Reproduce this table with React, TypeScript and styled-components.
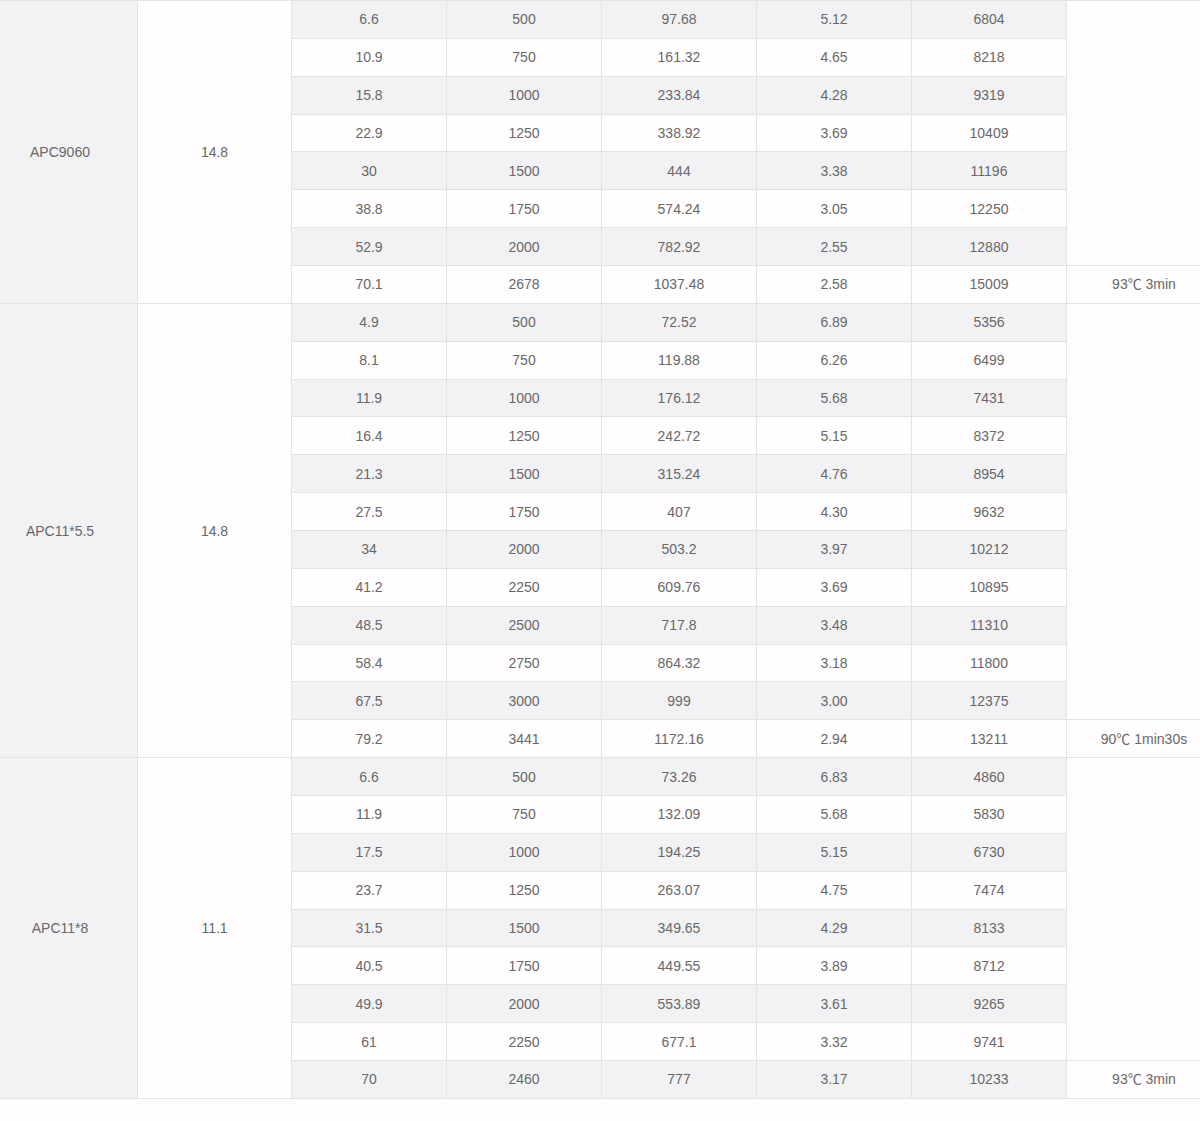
import styled, { createGlobalStyle } from "styled-components";

type Block = {
  model: string;
  voltage: string;
  rows: string[][];
  note: string;
};

const blocks: Block[] = [
  {
    model: "APC9060",
    voltage: "14.8",
    note: "93℃ 3min",
    rows: [
      ["6.6", "500", "97.68", "5.12", "6804"],
      ["10.9", "750", "161.32", "4.65", "8218"],
      ["15.8", "1000", "233.84", "4.28", "9319"],
      ["22.9", "1250", "338.92", "3.69", "10409"],
      ["30", "1500", "444", "3.38", "11196"],
      ["38.8", "1750", "574.24", "3.05", "12250"],
      ["52.9", "2000", "782.92", "2.55", "12880"],
      ["70.1", "2678", "1037.48", "2.58", "15009"],
    ],
  },
  {
    model: "APC11*5.5",
    voltage: "14.8",
    note: "90℃ 1min30s",
    rows: [
      ["4.9", "500", "72.52", "6.89", "5356"],
      ["8.1", "750", "119.88", "6.26", "6499"],
      ["11.9", "1000", "176.12", "5.68", "7431"],
      ["16.4", "1250", "242.72", "5.15", "8372"],
      ["21.3", "1500", "315.24", "4.76", "8954"],
      ["27.5", "1750", "407", "4.30", "9632"],
      ["34", "2000", "503.2", "3.97", "10212"],
      ["41.2", "2250", "609.76", "3.69", "10895"],
      ["48.5", "2500", "717.8", "3.48", "11310"],
      ["58.4", "2750", "864.32", "3.18", "11800"],
      ["67.5", "3000", "999", "3.00", "12375"],
      ["79.2", "3441", "1172.16", "2.94", "13211"],
    ],
  },
  {
    model: "APC11*8",
    voltage: "11.1",
    note: "93℃ 3min",
    rows: [
      ["6.6", "500", "73.26", "6.83", "4860"],
      ["11.9", "750", "132.09", "5.68", "5830"],
      ["17.5", "1000", "194.25", "5.15", "6730"],
      ["23.7", "1250", "263.07", "4.75", "7474"],
      ["31.5", "1500", "349.65", "4.29", "8133"],
      ["40.5", "1750", "449.55", "3.89", "8712"],
      ["49.9", "2000", "553.89", "3.61", "9265"],
      ["61", "2250", "677.1", "3.32", "9741"],
      ["70", "2460", "777", "3.17", "10233"],
    ],
  },
];

// first column is partly cut off at the left edge, like the screenshot
const colWidths = [155, 154, 155, 155, 155, 155, 155, 155];

const GlobalStyle = createGlobalStyle`
  html, body {
    margin: 0;
    padding: 0;
    background: #fffcfc;
  }
`;

const App = () => {
  let rowIndex = 0;

  return (
    <>
      <GlobalStyle />
      <Page>
        <Table>
          <colgroup>
            {colWidths.map((w, i) => (
              <col key={i} style={{ width: w }} />
            ))}
          </colgroup>
          <tbody>
            {blocks.map((block) =>
              block.rows.map((row, i) => {
                rowIndex += 1;
                const shaded = rowIndex % 2 === 1;
                const last = i === block.rows.length - 1;
                return (
                  <Row key={block.model + i}>
                    {i === 0 && (
                      <>
                        <Cell $tone="gray" rowSpan={block.rows.length}>
                          {block.model}
                        </Cell>
                        <Cell $tone="white" rowSpan={block.rows.length}>
                          {block.voltage}
                        </Cell>
                      </>
                    )}
                    {row.map((value, j) => (
                      <Cell key={j} $tone={shaded ? "gray" : "white"}>
                        {value}
                      </Cell>
                    ))}
                    {i === 0 && (
                      <Cell $tone="white" rowSpan={block.rows.length - 1} />
                    )}
                    {last && <Cell $tone="white">{block.note}</Cell>}
                  </Row>
                );
              })
            )}
          </tbody>
        </Table>
      </Page>
    </>
  );
};

export default App;

const Page = styled.div`
  width: 1200px;
  height: 1121px;
  overflow: hidden;
  background: #fffcfc;
`;

const Table = styled.table`
  margin-left: -18px;
  width: 1239px;
  table-layout: fixed;
  border-collapse: collapse;
  font-family: "Liberation Sans", "Noto Sans CJK SC", sans-serif;
  font-size: 14px;
  color: #686868;
`;

const Row = styled.tr`
  height: 37.87px;
`;

const Cell = styled.td<{ $tone: "gray" | "white" }>`
  border: 1px solid #e3e3e3;
  padding: 0 8px;
  text-align: center;
  vertical-align: middle;
  line-height: 20px;
  background: ${(p) => (p.$tone === "gray" ? "#f2f2f4" : "#fffdfd")};
`;
